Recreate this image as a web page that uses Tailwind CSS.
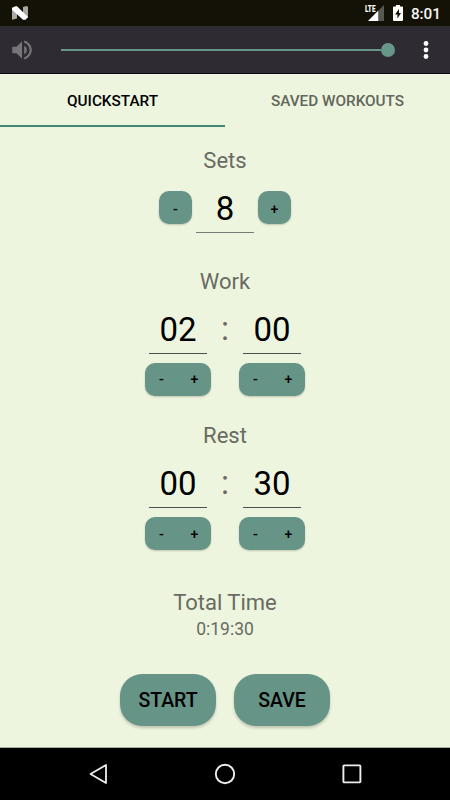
<!DOCTYPE html>
<html lang="en">
<head>
<meta charset="utf-8">
<title>Interval Timer</title>
<script src="https://cdn.jsdelivr.net/npm/@tailwindcss/browser@4"></script>
</head>
<body class="flex h-[800px] w-[450px] flex-col overflow-hidden bg-[#eef5de] font-['Roboto',sans-serif] text-black">
  <!-- Status bar -->
  <header class="flex h-[26px] shrink-0 items-center justify-between bg-[#141206] pr-[9px] pl-[12px]">
    <svg class="h-[14px] w-[16px]" viewBox="0 0 16 14"><path d="M0 2L5 5V12.500L0 13.700ZM11 1L14.500 0L16 1V12L11 9Z" fill="#aaa9a4"/><path d="M0 1.800L3.500 .3H5L16 11L13.500 13.700H11L0 3.800Z" fill="#fff"/></svg>
    <div class="flex h-full items-center">
      <svg class="h-[18px] w-[20px]" viewBox="0 0 20 18"><path d="M19 1V17H3Z" fill="#595850"/><path d="M13.200 6.800V17H3Z" fill="#fff"/><text x="0" y="8" font-size="9.500" font-weight="900" textLength="10.500" lengthAdjust="spacingAndGlyphs" fill="#fff" stroke="#141206" stroke-width="1" paint-order="stroke">LTE</text></svg>
      <svg class="ml-[8px] h-[18px] w-[10px]" viewBox="0 0 10 18"><path d="M3 1H7V2.500H9Q10 2.500 10 3.500V16Q10 17 9 17H1Q0 17 0 16V3.500Q0 2.500 1 2.500H3Z" fill="#fff"/><path d="M6 5L2 10.500H4.400V14.500L8 9H6Z" fill="#141206"/></svg>
      <span class="ml-[8px] pt-[2px] text-[15.300px] leading-[26px] font-medium text-[#f4f4f4]">8:01</span>
    </div>
  </header>
  <!-- Volume bar -->
  <div class="flex h-[48px] shrink-0 items-center border-b border-[#090818] bg-[#2f2b33] pt-px pl-[9px]">
    <svg class="size-[26px]" viewBox="0 0 24 24" fill="#77757a"><path d="M3 9v6h4l5 5V4L7 9H3zm13.500 3c0-1.770-1.020-3.290-2.500-4.030v8.050c1.480-.73 2.500-2.250 2.500-4.020zM14 3.230v2.060c2.890.86 5 3.540 5 6.710s-2.110 5.850-5 6.710v2.060c4.010-.91 7-4.490 7-8.770s-2.990-7.860-7-8.770z"/></svg>
    <div class="ml-[26px] flex w-[334px] items-center">
      <div class="h-[2px] flex-1 bg-[#669788]"></div>
      <div class="size-[14px] rounded-full bg-[#669788]"></div>
    </div>
    <svg class="ml-[28px] h-[20px] w-[6px]" viewBox="0 0 6 20"><circle cx="3" cy="3.500" r="2.400" fill="#fff"/><circle cx="3" cy="10" r="2.400" fill="#fff"/><circle cx="3" cy="16.500" r="2.400" fill="#fff"/></svg>
  </div>
  <!-- Tabs -->
  <nav class="grid h-[53px] shrink-0 grid-cols-2 text-center text-[15.300px] leading-[48px] font-medium">
    <div class="border-b-2 border-[#3f8778] pt-[3px]">QUICKSTART</div>
    <div class="pt-[3px] text-[#62665c]">SAVED WORKOUTS</div>
  </nav>
  <main class="flex flex-1 flex-col items-center">
    <h2 class="mt-[21px] text-[22px] leading-[26px] text-[#686b62]">Sets</h2>
    <div class="mt-[9px] flex h-[50px]">
      <button class="mt-[8px] size-[33px] rounded-[10px] bg-[#669486] pt-[3px] text-[14px] font-medium shadow-[0_1px_2px_#0003]">-</button>
      <div class="mx-[4px] h-[50px] w-[58px] border-b border-[#777b70] text-center text-[33px] leading-[51px]">8</div>
      <button class="mt-[8px] size-[33px] rounded-[10px] bg-[#669486] pt-[3px] text-[14px] font-medium shadow-[0_1px_2px_#0003]">+</button>
    </div>
    <h2 class="mt-[36px] text-[22px] leading-[26px] text-[#686b62]">Work</h2>
    <div class="mt-[9px] flex w-[160px] items-start justify-between">
      <div class="flex w-[66px] flex-col items-center">
        <div class="h-[50px] w-[58px] border-b border-[#4e5149] text-center text-[33px] leading-[52px]">02</div>
        <div class="mt-[9px] flex h-[33px] w-[66px] rounded-[10px] bg-[#669486] text-[14px] font-medium shadow-[0_1px_2px_#0003]"><button class="flex-1">-</button><button class="flex-1">+</button></div>
      </div>
      <span class="text-[33px] leading-[50px] text-[#686b62]">:</span>
      <div class="flex w-[66px] flex-col items-center">
        <div class="h-[50px] w-[58px] border-b border-[#4e5149] text-center text-[33px] leading-[52px]">00</div>
        <div class="mt-[9px] flex h-[33px] w-[66px] rounded-[10px] bg-[#669486] text-[14px] font-medium shadow-[0_1px_2px_#0003]"><button class="flex-1">-</button><button class="flex-1">+</button></div>
      </div>
    </div>
    <h2 class="mt-[27px] text-[22px] leading-[26px] text-[#686b62]">Rest</h2>
    <div class="mt-[9px] flex w-[160px] items-start justify-between">
      <div class="flex w-[66px] flex-col items-center">
        <div class="h-[50px] w-[58px] border-b border-[#4e5149] text-center text-[33px] leading-[52px]">00</div>
        <div class="mt-[9px] flex h-[33px] w-[66px] rounded-[10px] bg-[#669486] text-[14px] font-medium shadow-[0_1px_2px_#0003]"><button class="flex-1 pt-px">-</button><button class="flex-1 pt-px">+</button></div>
      </div>
      <span class="text-[33px] leading-[50px] text-[#686b62]">:</span>
      <div class="flex w-[66px] flex-col items-center">
        <div class="h-[50px] w-[58px] border-b border-[#4e5149] text-center text-[33px] leading-[52px]">30</div>
        <div class="mt-[9px] flex h-[33px] w-[66px] rounded-[10px] bg-[#669486] text-[14px] font-medium shadow-[0_1px_2px_#0003]"><button class="flex-1 pt-px">-</button><button class="flex-1 pt-px">+</button></div>
      </div>
    </div>
    <h2 class="mt-[40px] text-[22px] leading-[26px] text-[#686b62]">Total Time</h2>
    <p class="mt-[3px] text-[17.500px] leading-[20px] text-[#686b62]">0:19:30</p>
    <div class="mt-[35px] flex gap-[18px] text-[19.500px] font-medium">
      <button class="h-[52px] w-[96px] rounded-[22px] bg-[#669486] pt-[2px] shadow-[0_2px_3px_#0003]">START</button>
      <button class="h-[52px] w-[96px] rounded-[22px] bg-[#669486] pt-[2px] shadow-[0_2px_3px_#0003]">SAVE</button>
    </div>
  </main>
  <!-- System navigation -->
  <footer class="flex h-[53px] shrink-0 items-center justify-between border-t border-[#a9ad9c] bg-black px-[88px]">
    <svg class="h-[22px] w-[20px]" viewBox="0 0 20 22"><path d="M18 2V20L2.500 11Z" fill="none" stroke="#eee" stroke-width="1.800" stroke-linejoin="round"/></svg>
    <svg class="size-[22px]" viewBox="0 0 22 22"><circle cx="11" cy="11" r="9.200" fill="none" stroke="#eee" stroke-width="1.900"/></svg>
    <svg class="h-[22px] w-[20px]" viewBox="0 0 20 22"><rect x="1.400" y="2.400" width="17" height="17" rx=".8" fill="none" stroke="#eee" stroke-width="1.900"/></svg>
  </footer>
</body>
</html>
